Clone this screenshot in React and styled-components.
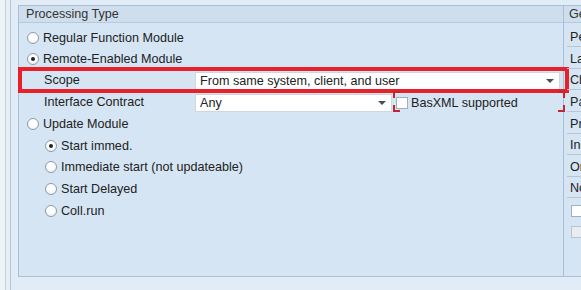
import React from "react";
import styled, { createGlobalStyle } from "styled-components";

const GlobalStyle = createGlobalStyle`
  html, body { margin: 0; padding: 0; }
  body {
    width: 581px;
    height: 290px;
    overflow: hidden;
    background: #e2ecf6;
    font-family: "Liberation Sans", Arial, sans-serif;
    font-size: 12.6px;
    color: #222;
  }
`;

const Screen = styled.div`
  display: flex;
  height: 290px;
`;

const Gutter = styled.div`
  width: 18px;
  flex: none;
  background: linear-gradient(
    to right,
    #eef3f8 0 5px,
    #c6d1dc 5px 6px,
    #e6eef6 6px 10px,
    #b2c5d9 10px 11px,
    transparent 11px
  );
`;

const Workspace = styled.div`
  flex: 1;
  padding: 5px 0 13px;
  display: flex;
  min-width: 0;
`;

const Panel = styled.section`
  display: flex;
  flex-direction: column;
  background: #d5e5f3;
  border-top: 1px solid #a9bfd6;
  border-bottom: 1px solid #a9bfd6;
  border-left: 1px solid #a9bfd6;
  width: ${(p) => (p.$w ? `${p.$w}px` : "auto")};
  flex: ${(p) => (p.$w ? "none" : "1")};
  min-width: 0;
  overflow: ${(p) => (p.$clip ? "hidden" : "visible")};
`;

const PanelHeader = styled.header`
  height: 16px;
  line-height: 17px;
  padding-left: ${(p) => p.$pad}px;
  background: #cfdeec;
  border-bottom: 1px solid #b7cadd;
  color: #333;
  white-space: nowrap;
`;

const PanelBody = styled.div`
  padding-top: 3px;
`;

const Row = styled.div`
  position: relative;
  box-sizing: border-box;
  display: flex;
  align-items: center;
  height: 21.6px;
  padding-top: 2px;
  padding-left: ${(p) => p.$indent || 0}px;
  white-space: nowrap;
`;

const Highlight = styled.div`
  position: relative;
  &::after {
    content: "";
    position: absolute;
    left: -1px;
    right: -6px;
    top: -2px;
    bottom: -2px;
    border: 4px solid #e8202a;
    pointer-events: none;
  }
`;

const Radio = styled.span`
  flex: none;
  width: 12px;
  height: 12px;
  box-sizing: border-box;
  border-radius: 50%;
  border: 1px solid #8e9ba8;
  background: radial-gradient(circle at 50% 35%, #ffffff 45%, #e2e6ea 100%);
  display: inline-flex;
  align-items: center;
  justify-content: center;
  margin-right: 4px;
  &::after {
    content: "";
    width: 4px;
    height: 4px;
    border-radius: 50%;
    background: ${(p) => (p.$checked ? "#222" : "transparent")};
  }
`;

const FieldLabel = styled.span`
  flex: none;
  box-sizing: border-box;
  width: ${(p) => p.$w}px;
  height: 19px;
  margin-left: ${(p) => p.$ml}px;
  padding-left: ${(p) => p.$pl}px;
  display: flex;
  align-items: center;
  border-bottom: 1px solid ${(p) => (p.$underline ? "#b9c6d2" : "transparent")};
`;

const Combo = styled.div`
  flex: none;
  box-sizing: border-box;
  width: ${(p) => p.$w}px;
  height: 18px;
  background: #fff;
  border: 1px solid #cdd7e0;
  display: flex;
  align-items: center;
  padding-left: 4px;
  &::after {
    content: "";
    margin-left: auto;
    margin-right: 5px;
    border-left: 4px solid transparent;
    border-right: 4px solid transparent;
    border-top: 4px solid #4a4f55;
  }
`;

const CheckGroup = styled.div`
  position: relative;
  flex: 1;
  align-self: stretch;
  margin: -2px 0 0 1px;
  padding: 2px 0 0 3px;
  display: flex;
  align-items: center;
`;

const Corner = styled.span`
  position: absolute;
  width: 5px;
  height: 5px;
  border-color: #c4262e;
  border-style: solid;
  border-width: 0;
  ${(p) => (p.$v === "top" ? "top: 0;" : "bottom: 0;")}
  ${(p) => (p.$h === "left" ? "left: 0;" : "right: -2px;")}
  ${(p) => (p.$v === "top" ? "border-top-width: 2px;" : "border-bottom-width: 2px;")}
  ${(p) => (p.$h === "left" ? "border-left-width: 2px;" : "border-right-width: 2px;")}
`;

const Checkbox = styled.span`
  flex: none;
  width: 12px;
  height: 12px;
  box-sizing: border-box;
  border: 1px solid ${(p) => (p.$disabled ? "#b9c3cc" : "#9fb0c1")};
  background: ${(p) => (p.$disabled ? "#e9edf1" : "#fff")};
  margin-right: ${(p) => p.$mr ?? 3}px;
`;

const leftRows = [
  { type: "radio", text: "Regular Function Module", indent: 8 },
  { type: "radio", text: "Remote-Enabled Module", indent: 8, checked: true },
];

const subRadios = [
  { text: "Start immed.", checked: true },
  { text: "Immediate start (not updateable)" },
  { text: "Start Delayed" },
  { text: "Coll.run" },
];

const generalLabels = [
  "Person Responsible",
  "Last Changed By",
  "Changed on",
  "Package",
  "Program Name",
  "Include Name",
  "Original lang.",
  "Not released",
];

export default function App() {
  return (
    <>
      <GlobalStyle />
      <Screen>
        <Gutter />
        <Workspace>
          <Panel $w={544}>
            <PanelHeader $pad={7}>Processing Type</PanelHeader>
            <PanelBody>
              {leftRows.map((r) => (
                <Row key={r.text} $indent={r.indent}>
                  <Radio $checked={r.checked} />
                  {r.text}
                </Row>
              ))}
              <Highlight>
                <Row>
                  <FieldLabel $w={153} $ml={23} $pl={2} $underline>
                    Scope
                  </FieldLabel>
                  <Combo $w={365}>From same system, client, and user</Combo>
                </Row>
              </Highlight>
              <Row>
                <FieldLabel $w={153} $ml={23} $pl={2}>
                  Interface Contract
                </FieldLabel>
                <Combo $w={197}>Any</Combo>
                <CheckGroup>
                  <Corner $v="top" $h="left" />
                  <Corner $v="top" $h="right" />
                  <Corner $v="bottom" $h="left" />
                  <Corner $v="bottom" $h="right" />
                  <Checkbox />
                  BasXML supported
                </CheckGroup>
              </Row>
              <Row $indent={8}>
                <Radio />
                Update Module
              </Row>
              {subRadios.map((r) => (
                <Row key={r.text} $indent={26}>
                  <Radio $checked={r.checked} />
                  {r.text}
                </Row>
              ))}
            </PanelBody>
          </Panel>
          <Panel $clip>
            <PanelHeader $pad={5}>General Data</PanelHeader>
            <PanelBody>
              {generalLabels.map((l) => (
                <Row key={l}>
                  <FieldLabel $w={150} $ml={3} $pl={3} $underline>
                    {l}
                  </FieldLabel>
                </Row>
              ))}
              <Row $indent={7}>
                <Checkbox />
                Global
              </Row>
              <Row $indent={7}>
                <Checkbox $disabled />
                Edit Lock
              </Row>
            </PanelBody>
          </Panel>
        </Workspace>
      </Screen>
    </>
  );
}
